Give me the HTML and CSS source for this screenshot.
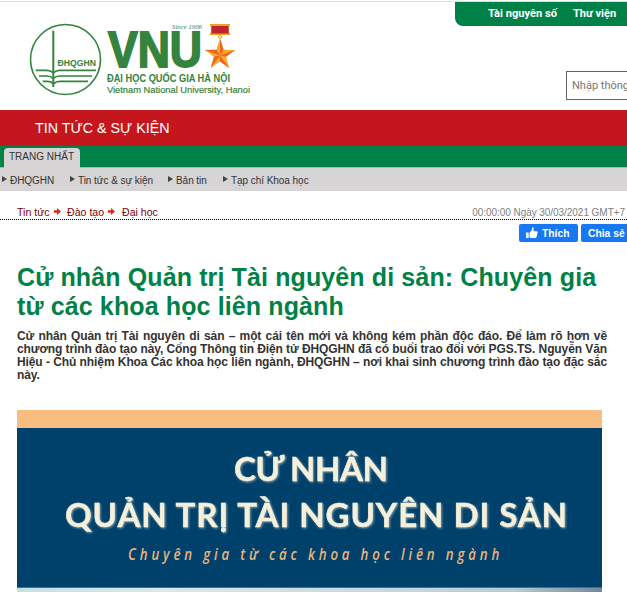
FILE: index.html
```html
<!DOCTYPE html>
<html lang="vi">
<head>
<meta charset="utf-8">
<title>Tin tức &amp; Sự kiện</title>
<link rel="stylesheet" href="styles.css">
</head>
<body>
<header class="header">
  <svg class="logo" viewBox="28 20 226 80" role="img">
    <g fill="none" stroke="#34833e">
      <circle cx="65.500" cy="59.500" r="35" stroke-width="1.600"/>
      <path d="M53.300 30.700V87" stroke-width="2"/>
      <path d="M35.700 70.300h11q4 0 6.600 2.500q2.600-2.500 6.600-2.500H96M39 76h8q4 0 6.300 2.500q2.600-2.500 6.600-2.500H92M42.700 81.300h4.500q4 0 6.100 2.500q2.600-2.500 6.600-2.500H88" stroke-width="1.700"/>
    </g>
    <g fill="#34833e">
      <text class="sans bold" x="57.500" y="66.300" font-size="8.700" textLength="38.500" lengthAdjust="spacingAndGlyphs">ĐHQGHN</text>
      <text class="sans heavy" x="108" y="66.800" font-size="50" textLength="94" lengthAdjust="spacingAndGlyphs">VNU</text>
      <text class="serif" x="172" y="29" font-size="7" textLength="30" lengthAdjust="spacingAndGlyphs">Since 1906</text>
      <text class="sans bold" x="107" y="81.800" font-size="10" textLength="123" lengthAdjust="spacingAndGlyphs">ĐẠI HỌC QUỐC GIA HÀ NỘI</text>
      <text class="sans thin" x="107" y="93.300" font-size="9.700" textLength="143" lengthAdjust="spacingAndGlyphs">Vietnam National University, Hanoi</text>
    </g>
    <path d="M210 24h20v2.500h-1v6h1V35h-20v-2.500h1v-6h-1z" fill="#f0a322"/>
    <path d="M211.500 26h17v7.500h-17z" fill="#bd2430"/>
    <circle cx="220" cy="37" r="1.500" fill="none" stroke="#f0a322"/>
    <path d="M220 38.500l3.600 11.200 11.600.2-9.200 6.900 3.300 11.200-9.300-6.500-9.300 6.500 3.300-11.200-9.200-6.900 11.600-.2z" fill="#f9a828"/>
    <path d="M220 38.500v17l3.600-5.800zM220 55.500l15.200-5.600-9.200 6.900zM220 55.500l9.300 12.500-9.300-6.500zM220 55.500l-9.300 12.500 3.300-11.200zM220 55.500l-15.200-5.600 11.600-.2z" fill="#ee6425"/>
  </svg>
  <nav class="quick"><a>Tài nguyên số</a><a>Thư viện</a></nav>
  <div class="search">Nhập thông</div>
</header>
<div class="section">TIN TỨC &amp; SỰ KIỆN</div>
<div class="tabs"><span class="tab">TRANG NHẤT</span></div>
<nav class="subnav">
  <a class="sub s1">ĐHQGHN</a><a class="sub s2">Tin tức &amp; sự kiện</a><a class="sub s3">Bản tin</a><a class="sub s4">Tạp chí Khoa học</a>
</nav>
<div class="crumbs">
  <div class="trail">
    <a class="c1">Tin tức</a><svg class="arrow" viewBox="0 0 7 7"><path d="M0 2.200h3V0l4 3.500L3 7V4.800H0z"/></svg>
    <a class="c2">Đào tạo</a><svg class="arrow" viewBox="0 0 7 7"><path d="M0 2.200h3V0l4 3.500L3 7V4.800H0z"/></svg>
    <a class="c3">Đại học</a>
  </div>
  <time class="time">00:00:00 Ngày 30/03/2021 GMT+7</time>
</div>
<div class="social">
  <a class="btn like"><svg class="thumb" viewBox="0 0 12 12"><path d="M0 5.500h2.700V11H0zM3.500 5.700L6 3V.8Q6 0 6.800.2 8.300.8 7.700 3L7.300 4.300h3.300q1.300.2 1 1.500l-1 4q-.3 1.200-1.500 1.200H5L3.500 10.300z"/></svg>Thích</a>
  <a class="btn share">Chia sẻ</a>
</div>
<article class="article">
  <h1 class="title">Cử nhân Quản trị Tài nguyên di sản: Chuyên gia<br>từ các khoa học liên ngành</h1>
  <p class="lead"><span>Cử nhân Quản trị Tài nguyên di sản – một cái tên mới và không kém phần độc đáo. Để làm rõ hơn về</span><span>chương trình đào tạo này, Cổng Thông tin Điện tử ĐHQGHN đã có buổi trao đổi với PGS.TS. Nguyễn Văn</span><span>Hiệu - Chủ nhiệm Khoa Các khoa học liên ngành, ĐHQGHN – nơi khai sinh chương trình đào tạo đặc sắc</span><span class="last">này.</span></p>
  <svg class="poster" viewBox="17 410 585 182">
    <defs><linearGradient id="sky"><stop offset="0" stop-color="#c5dfe5"/><stop offset=".25" stop-color="#d8e9ee"/><stop offset=".7" stop-color="#c2d4dc"/><stop offset=".85" stop-color="#b7cbd2"/><stop offset="1" stop-color="#70899a"/></linearGradient></defs>
    <path d="M17 410h585v18H17z" fill="#f9bd80"/>
    <path d="M17 428h585v160H17z" fill="#00416b"/>
    <path d="M17 588h585v4H17z" fill="url(#sky)"/>
    <path d="M17 587h585v1H17z" fill="#3b7195"/>
    <g class="poster-title" font-size="33">
      <text x="234" y="480.500" textLength="154" lengthAdjust="spacing">CỬ NHÂN</text>
      <text x="65" y="526.500" textLength="502" lengthAdjust="spacing">QUẢN TRỊ TÀI NGUYÊN DI SẢN</text>
    </g>
    <g transform="translate(128 560) scale(.78 1)"><text class="script" x="0" y="0" font-size="17" textLength="476">Chuyên gia từ các khoa học liên ngành</text></g>
  </svg>
</article>
</body>
</html>
```
FILE: styles.css
```css
* { box-sizing: border-box; }
body { margin: 0; width: 627px; height: 592px; overflow: hidden; background: #fff; font-family: "Liberation Sans", Arial, sans-serif; }
.sans { font-family: "Liberation Sans", sans-serif; }
.bold { font-weight: 700; }
.heavy { font-weight: 700; stroke: #34833e; stroke-width: 1.8; }
.thin { stroke: #34833e; stroke-width: .2; }
.serif { font-family: "Liberation Serif", serif; font-style: italic; }

.header { height: 110px; border-top: 1px solid #fff; box-shadow: inset 0 1px #ddd; display: grid; grid-template-columns: 455px 111px 61px; grid-template-rows: 70px 39px; }
.logo { width: 226px; height: 80px; margin: 19px 0 0 28px; grid-row: 1 / 3; }
.quick { grid-column: 2 / 4; margin-top: 1px; height: 24px; background: #008148; border-bottom-left-radius: 8px; color: #fff; font: 700 11.1px/24px Roboto, sans-serif; display: flex; gap: 16px; padding-left: 33px; white-space: nowrap; }
.search { grid-column: 3; height: 29px; width: 80px; border: 1px solid #666; color: #757575; font: 11px/27px Roboto, sans-serif; padding-left: 5px; white-space: nowrap; }
.section { height: 36px; background: #c4161c; color: #fff; font-size: 14.3px; line-height: 36px; padding-left: 35px; }
.tabs { height: 22px; background: #008148; border-bottom: 1px solid #9bbcab; display: flex; padding: 2px 0 0 4px; }
.tab { width: 76px; height: 20px; background: #d6d4d5; border-radius: 4px 4px 0 0; color: #333; font-size: 10px; line-height: 18px; padding-left: 5px; white-space: nowrap; }
.subnav { height: 23px; background: #d6d4d5; display: flex; padding-left: 2px; }
.sub { display: flex; color: #333; font-size: 10px; letter-spacing: -.05px; line-height: 25px; white-space: nowrap; }
.sub::before { content: ""; margin: 8px 3px 0 0; width: 0; height: 0; border: 3px solid transparent; border-left: 5px solid #3e4548; border-right: 0; }
.s1 { width: 68px; }
.s2 { width: 98px; }
.s3 { width: 55px; }

.crumbs { height: 29px; border-bottom: 1px dotted #000; display: flex; justify-content: space-between; padding: 15px 2px 0 17px; line-height: 13px; white-space: nowrap; }
.trail { display: flex; color: #800000; font-size: 10.6px; }
.c1 { width: 37px; }
.c2 { width: 41px; margin-left: 6px; }
.c3 { margin-left: 7px; }
.arrow { width: 7px; height: 7px; margin-top: 2px; fill: #e32b0c; }
.time { color: #808080; font-size: 10px; letter-spacing: -.05px; }
.social { height: 22px; display: flex; gap: 3px; padding: 4px 0 0 519px; }
.btn { flex: none; height: 18px; border-radius: 2px; background: #1877f2; color: #fff; font-size: 10.3px; font-weight: 700; line-height: 19px; white-space: nowrap; }
.like { width: 59px; padding-left: 7px; display: flex; gap: 4px; }
.thumb { width: 12px; height: 12px; margin-top: 3px; fill: #fff; }
.share { width: 62px; padding-left: 7px; }

.article { padding: 21px 0 0 17px; }
.title { margin: 0; color: #008148; font-size: 25px; font-weight: 700; line-height: 29px; letter-spacing: .12px; white-space: nowrap; }
.lead { margin: 9px 0 28px; width: 590px; color: #333; font-size: 12px; font-weight: 700; line-height: 13px; letter-spacing: -.1px; }
.lead span { display: block; text-align: justify; text-align-last: justify; white-space: nowrap; }
.lead .last { text-align-last: left; }
.poster { display: block; width: 585px; height: 182px; }
.poster-title { font-family: Lato, sans-serif; font-weight: 700; fill: #f5f0dc; stroke: #f5f0dc; stroke-width: .4; filter: drop-shadow(1px 1px 1px #f5f0dc88); }
.script { font-family: "Open Sans", sans-serif; font-style: italic; font-weight: 600; fill: #e5b47f; }
```
